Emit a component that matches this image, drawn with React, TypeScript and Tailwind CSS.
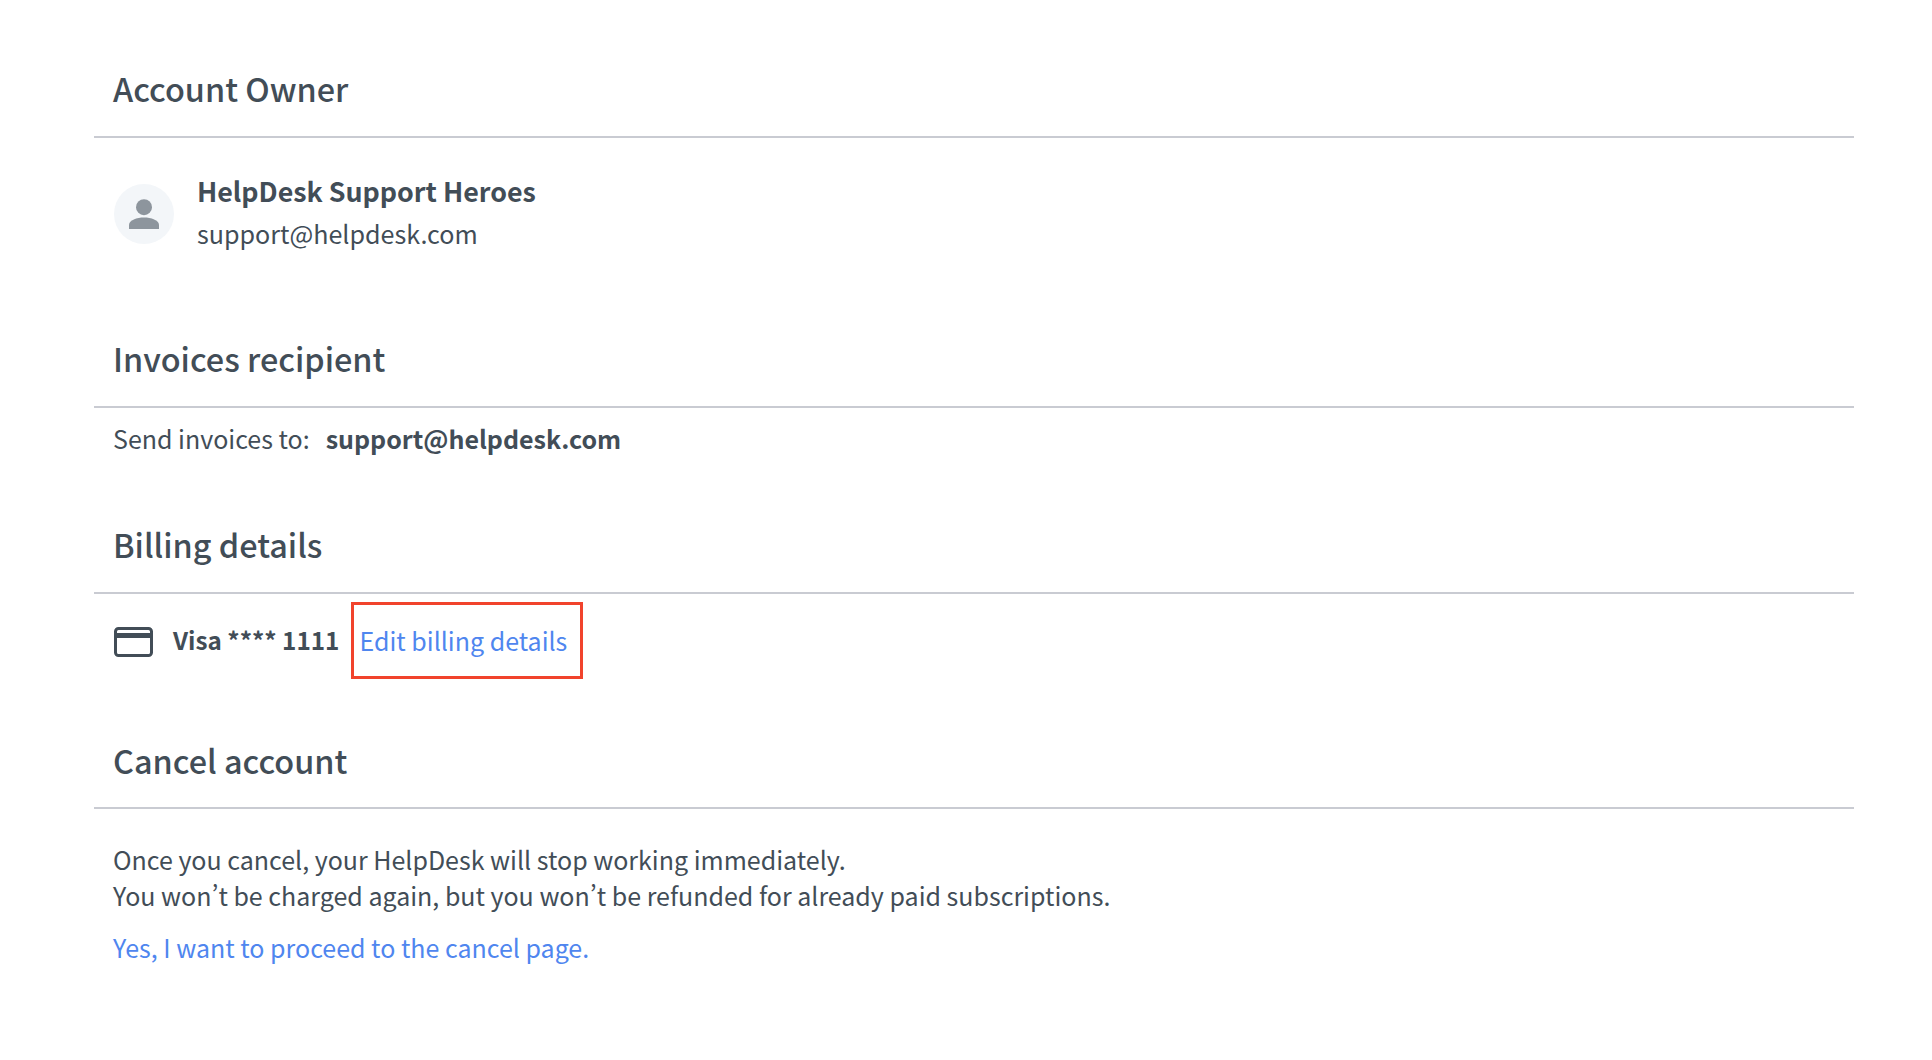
import React from "react";

function Heading({ children, cls }: { children: React.ReactNode; cls: string }) {
  return (
    <div className={`border-b-2 border-[#c9cbd2] pl-[19px] ${cls}`}>
      <h2 className="text-[32.4px] leading-[40px] font-medium text-[#424d57]">{children}</h2>
    </div>
  );
}

export default function App() {
  return (
    <div className="min-h-[1060px] bg-white pl-[94px] pr-[78px] pt-[68px] text-[#424d57] font-['Noto_Sans_CJK_SC','Noto_Sans',sans-serif] text-[25px] [font-variant-east-asian:proportional-width]">
      <Heading cls="h-[70px]">Account Owner</Heading>
      <div className="flex items-start gap-[23px] px-5 pt-[32px] h-[156px]">
        <div className="mt-[14px] flex h-[60px] w-[60px] items-center justify-center rounded-full bg-[#f3f6f9]">
          <svg width="30" height="30" viewBox="0 0 30 30" fill="#8d959d">
            <circle cx="15" cy="8.2" r="8" />
            <path d="M0 30v-4c0-5 8-7.500 15-7.500s15 2.500 15 7.500v4z" />
          </svg>
        </div>
        <div>
          <div className="text-[26.8px] font-bold leading-[42px]">HelpDesk Support Heroes</div>
          <div className="text-[25.1px] leading-[42px]">support@helpdesk.com</div>
        </div>
      </div>
      <Heading cls="h-[70px] mt-[44px]">Invoices recipient</Heading>
      <div className="flex gap-4 pl-[19px] pt-[12px] h-[116px] items-start">
        <span className="leading-[36px]">Send invoices to:</span>
        <span className="font-bold leading-[36px]">support@helpdesk.com</span>
      </div>
      <Heading cls="h-[70px]">Billing details</Heading>
      <div className="flex pl-5 h-[146px] items-start pt-[8px]">
        <svg className="mt-[25px] shrink-0" width="39" height="30" viewBox="0 0 39 30">
          <rect x="1.500" y="1.500" width="36" height="27" rx="3" fill="none" stroke="#424d57" strokeWidth="3" />
          <rect x="2" y="6" width="35" height="5" fill="#424d57" />
        </svg>
        <span className="ml-5 mt-[20px] text-[24.3px] font-bold leading-[36px]">Visa **** 1111</span>
        <span className="ml-3 border-[3px] border-[#f1432c] pl-[5px] h-[77px] w-[232px] flex items-center whitespace-nowrap text-[#4f86ef]">Edit billing details</span>
      </div>
      <Heading cls="h-[69px]">Cancel account</Heading>
      <div className="pl-[19px] pt-[32px]">
        <p className="leading-[36px]">Once you cancel, your HelpDesk will stop working immediately.</p>
        <p className="leading-[36px]">You won’t be charged again, but you won’t be refunded for already paid subscriptions.</p>
        <p className="mt-4 leading-[36px] text-[#4f86ef]">Yes, I want to proceed to the cancel page.</p>
      </div>
    </div>
  );
}
